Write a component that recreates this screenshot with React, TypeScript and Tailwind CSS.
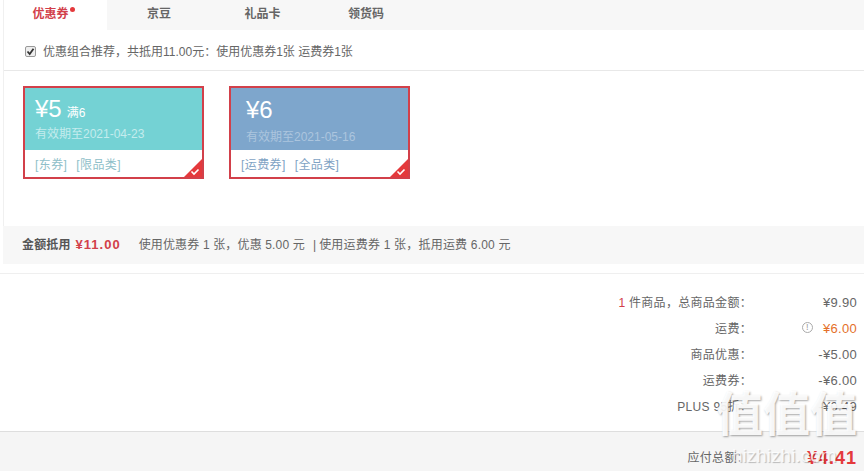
const font = "font-['Liberation_Sans','Noto_Sans_CJK_SC',sans-serif]";

function CouponCheck() {
  return (
    <div className="absolute right-0 bottom-0 h-[18px] w-[18px]">
      <svg width="18" height="18" viewBox="0 0 18 18">
        <path d="M18 0V18H0Z" fill="#e4393c" />
        <path d="M7.5 12.5L10 15L14.5 10.5" fill="none" stroke="#fff" strokeWidth="1.6" />
      </svg>
    </div>
  );
}

interface CouponProps {
  amount: string;
  limit?: string;
  date: string;
  tags: string[];
  headClass: string;
  dateClass: string;
  tagClass: string;
  padClass: string;
}

function Coupon({ amount, limit, date, tags, headClass, dateClass, tagClass, padClass }: CouponProps) {
  return (
    <div className="relative h-[93px] w-[181px] border-2 border-[#d2404a] bg-white">
      <div className={`h-[62px] text-white ${headClass} ${padClass}`}>
        <div className="flex items-baseline">
          <span className="text-[24px] leading-[26px]">{amount}</span>
          {limit && <span className="ml-[5px] text-[12px]">{limit}</span>}
        </div>
        <div className={`text-[12px] leading-[16px] ${dateClass}`}>{date}</div>
      </div>
      <div className={`flex h-[29px] items-center gap-[9px] pl-[10px] text-[12px] tracking-[0.4px] ${tagClass}`}>
        {tags.map((t) => (
          <span key={t}>[{t}]</span>
        ))}
      </div>
      <CouponCheck />
    </div>
  );
}

function SummaryRow({ label, value, valueClass, extra }: { label: React.ReactNode; value: string; valueClass?: string; extra?: React.ReactNode }) {
  return (
    <div className="flex h-[26px] items-center justify-end pr-[7px] text-[12px] tracking-[0.3px] text-[#666]">
      <div className="text-right">{label}</div>
      <div className="relative w-[105px] text-right">
        {extra}
        <span className={`text-[13px] tracking-[0.3px] ${valueClass ?? 'text-[#666]'}`}>{value}</span>
      </div>
    </div>
  );
}

export default function App() {
  return (
    <div className={`relative h-[471px] w-[864px] overflow-hidden bg-white ${font}`}>
      <div className="ml-[3px] h-[226px] border-l border-[#f0f0f0]">
        <div className="flex h-[30px] bg-[#f7f7f7] pb-[2px] text-[12px] font-bold text-[#666]">
          <div className="-mb-[2px] flex w-[103px] items-center justify-center bg-white pr-[10px] pb-[2px] text-[#d2404a]">
            <span className="relative">
              优惠券
              <span className="absolute top-[2px] -right-[6px] h-[5px] w-[5px] rounded-full bg-[#e4393c]" />
            </span>
          </div>
          <div className="flex w-[104px] items-center justify-center">京豆</div>
          <div className="flex w-[103px] items-center justify-center">礼品卡</div>
          <div className="flex w-[104px] items-center justify-center">领货码</div>
        </div>
        <div className="flex h-[41px] items-center border-b border-[#e8e8e8] pt-[3px] pl-[21px] text-[12px] text-[#666]">
          <span className="flex h-[11px] w-[11px] items-center justify-center rounded-[2px] border border-[#999] bg-[#eee]">
            <svg width="9" height="9" viewBox="0 0 9 9">
              <path d="M1.5 4.5L3.7 7L7.5 1.8" fill="none" stroke="#333" strokeWidth="1.8" />
            </svg>
          </span>
          <span className="ml-[7px]">优惠组合推荐，共抵用11.00元：使用优惠券1张 运费券1张</span>
        </div>
        <div className="flex gap-[25px] pt-[15px] pl-[19px]">
          <Coupon
            amount="¥5"
            limit="满6"
            date="有效期至2021-04-23"
            tags={['东券', '限品类']}
            headClass="bg-[#74d2d4]"
            dateClass="mt-[4px] text-[#c4eced]"
            tagClass="text-[#8fbfc9]"
            padClass="px-[10px] pt-[8px]"
          />
          <Coupon
            amount="¥6"
            date="有效期至2021-05-16"
            tags={['运费券', '全品类']}
            headClass="bg-[#7ea6cc]"
            dateClass="mt-[6px] text-[#acc5de]"
            tagClass="text-[#7fa3c4]"
            padClass="px-[15px] pt-[9px]"
          />
        </div>
      </div>

      <div className="ml-[3px] flex h-[38px] items-center bg-[#f7f7f7] pl-[19px] text-[12px] tracking-[0.15px] text-[#666]">
        <span className="font-bold text-[#555]">金额抵用</span>
        <span className="ml-[5px] text-[13px] font-bold tracking-[1px] text-[#d2404a]">¥11.00</span>
        <span className="ml-[18px]">使用优惠券 1 张，优惠 5.00 元</span>
        <span className="ml-[8px]">|</span>
        <span className="ml-[3px] tracking-[0.2px]">使用运费券 1 张，抵用运费 6.00 元</span>
      </div>

      <div className="mt-[9px] h-[158px] border-t border-[#efefef] pt-[16px]">
        <SummaryRow
          label={
            <>
              <span className="text-[#d2404a]">1</span> 件商品，总商品金额：
            </>
          }
          value="¥9.90"
        />
        <SummaryRow
          label="运费："
          value="¥6.00"
          valueClass="text-[#e4702a]"
          extra={
            <span className="absolute top-[3px] left-[50px] flex h-[11px] w-[11px] items-center justify-center rounded-full border border-[#aaa] text-[9px] text-[#999]">
              !
            </span>
          }
        />
        <SummaryRow label="商品优惠：" value="-¥5.00" />
        <SummaryRow label="运费券：" value="-¥6.00" />
        <SummaryRow label="PLUS 95折：" value="-¥0.49" />
      </div>

      <div className="flex h-[40px] items-center justify-end border-t border-[#dedede] bg-[#f5f5f5] pt-[13px] pr-[7px] text-[12px] tracking-[0.3px] text-[#666]">
        <span>应付总额：</span>
        <span className="w-[108px] text-right text-[18px] font-bold tracking-[1px] text-[#e4393c]">¥4.41</span>
      </div>

      {/* watermark */}
      <div className="pointer-events-none absolute top-[385px] left-[716px] text-[47px] leading-[60px] font-bold text-white/90 [text-shadow:1px_1px_2px_rgba(0,0,0,0.35)]">
        值值值
      </div>
      <div className="pointer-events-none absolute top-[444px] left-[732px] text-[19px] leading-[24px] text-white/80 [text-shadow:1px_1px_1px_rgba(0,0,0,0.25)]">
        hizhizhi.com
      </div>
    </div>
  );
}
